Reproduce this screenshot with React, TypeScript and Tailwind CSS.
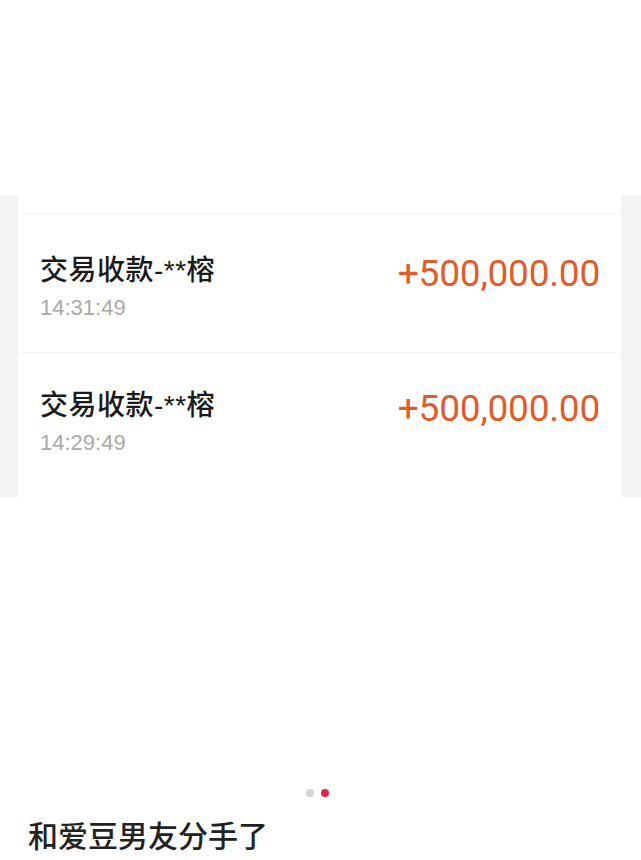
import React from "react";

const rows = [
  { time: "14:31:49", first: true },
  { time: "14:29:49", first: false },
];

export default function App() {
  return (
    <div className="w-[641px] h-[860px] bg-white overflow-hidden flex flex-col [font-family:'Liberation_Sans','Noto_Sans_CJK_SC',sans-serif]">
      <div className="h-[195px] shrink-0" />
      <div className="h-[302px] shrink-0 bg-[#f3f3f3] pl-[18px] pr-[20px] flex">
        <div className="flex-1 bg-white pt-[18px] flex flex-col">
          {rows.map((r) => (
            <div
              key={r.time}
              className={
                r.first
                  ? "h-[139px] border-t border-[#f6f6f6] pt-[40px] pl-[22px] pr-[21px] flex justify-between items-start"
                  : "flex-1 border-t border-[#f6f6f6] pt-[36px] pl-[22px] pr-[21px] flex justify-between items-start"
              }
            >
              <div className="flex flex-col">
                <div className="text-[28px] leading-[34px] font-medium text-[#1a1a1a] tracking-[0.5px]">
                  交易收款-**榕
                </div>
                <div className="mt-[7px] text-[22px] leading-[26px] text-[#a9a9a9]">
                  {r.time}
                </div>
              </div>
              <div className="mt-[1px] text-[37px] leading-[38px] text-[#df5d2b] [font-family:Roboto,sans-serif] tracking-[-0.2px]">
                +500,000.00
              </div>
            </div>
          ))}
        </div>
      </div>
      <div className="h-[292px] shrink-0" />
      <div className="flex justify-center gap-[7px] h-[8px] shrink-0 pr-[6px]">
        <div className="w-[8px] h-[8px] rounded-full bg-[#d4d4d4]" />
        <div className="w-[8px] h-[8px] rounded-full bg-[#e8234a]" />
      </div>
      <div className="mt-[19px] pl-[28px] text-[30px] leading-[36px] font-medium text-[#222222] [font-family:'Noto_Sans_CJK_SC',sans-serif]">
        和爱豆男友分手了
      </div>
    </div>
  );
}
